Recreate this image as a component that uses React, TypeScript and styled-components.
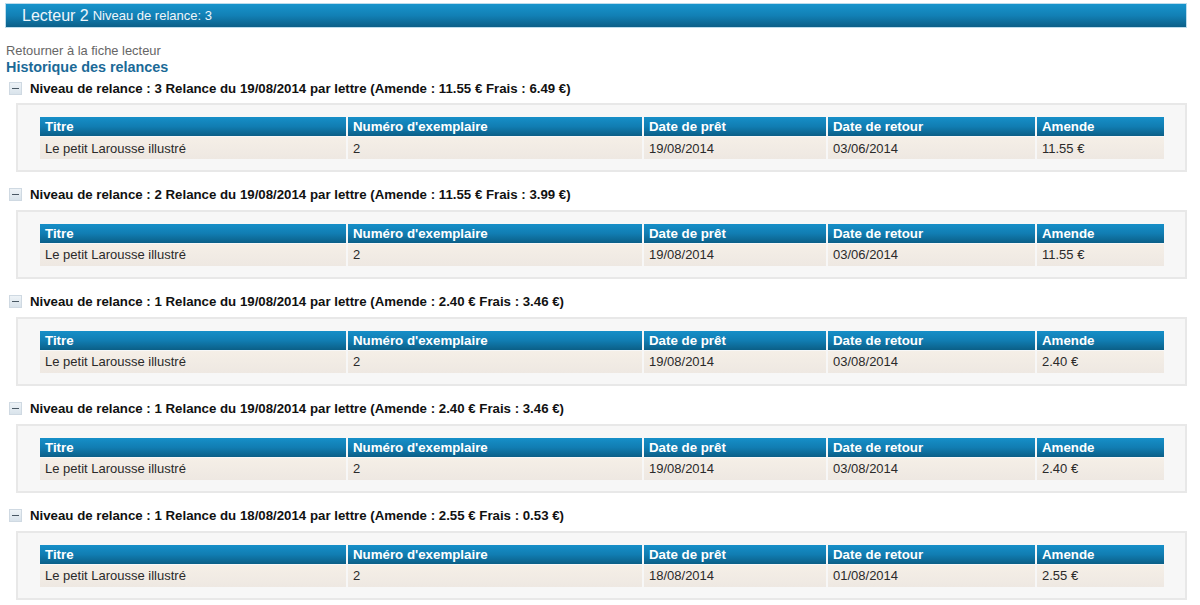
import React from "react";
import styled, { createGlobalStyle } from "styled-components";

const GlobalStyle = createGlobalStyle`
  html, body { margin: 0; padding: 0; background: #ffffff; overflow: hidden; }
  body { font-family: "Liberation Sans", Arial, sans-serif; color: #222; }
`;

const Page = styled.div`
  display: flex;
  flex-direction: column;
  padding-top: 3px;
`;

const TopBar = styled.div`
  margin: 0 13px 0 5px;
  height: 25px;
  box-sizing: border-box;
  border: 1px solid #bcdcec;
  background: linear-gradient(to bottom, #1894cc 0%, #1280b5 50%, #0b5f88 100%);
  display: flex;
  align-items: center;
  padding-left: 16px;
  color: #eef6fb;
  gap: 4px;
`;

const BarTitle = styled.span`
  font-size: 16px;
`;

const BarSub = styled.span`
  font-size: 13px;
`;

const BackLink = styled.a`
  margin: 16px 0 0 6px;
  font-size: 12.9px;
  line-height: 14px;
  color: #666;
  text-decoration: none;
`;

const Heading = styled.h2`
  margin: 1px 0 0 6px;
  font-size: 14.4px;
  line-height: 16px;
  font-weight: bold;
  color: #1b6a97;
`;

const Section = styled.section`
  display: flex;
  flex-direction: column;
  margin-top: ${(p: { $first?: boolean }) => (p.$first ? "6px" : "15.9px")};
`;

const SectionHeader = styled.div`
  display: flex;
  align-items: center;
  height: 14px;
  padding-left: 9px;
  gap: 8px;
  font-size: 13.25px;
  font-weight: bold;
  color: #111;
`;

const Toggle = styled.span`
  width: 13px;
  height: 13px;
  box-sizing: border-box;
  border: 1px solid #cfd9e2;
  background: linear-gradient(to bottom, #eef3f7, #d9e3eb);
  display: flex;
  align-items: center;
  justify-content: center;
  &::before {
    content: "";
    width: 7px;
    height: 1px;
    background: #4a5864;
  }
`;

const Panel = styled.div`
  margin: 8px 13px 0 16px;
  border: 2px solid #e8e8e8;
  background: #f7f7f7;
  padding: 12px 21px 11px 22px;
`;

const Grid = styled.div`
  display: grid;
  grid-template-columns: 306fr 294fr 182fr 207fr 127fr;
  column-gap: 2px;
  row-gap: 1px;
`;

const HeadCell = styled.div`
  height: 19px;
  display: flex;
  align-items: center;
  padding-left: 5px;
  font-size: 13.3px;
  font-weight: bold;
  color: #fff;
  background: linear-gradient(to bottom, #168fc8 0%, #117db2 50%, #0b5f87 100%);
`;

const DataCell = styled.div`
  height: 22px;
  display: flex;
  align-items: center;
  padding-left: 5px;
  font-size: 13px;
  color: #2a2a2a;
  background: linear-gradient(to bottom, #f5efe7, #eee8e2);
`;

type Relance = {
  niveau: number;
  date: string;
  amende: string;
  frais: string;
  pret: string;
  retour: string;
};

const relances: Relance[] = [
  { niveau: 3, date: "19/08/2014", amende: "11.55", frais: "6.49", pret: "19/08/2014", retour: "03/06/2014" },
  { niveau: 2, date: "19/08/2014", amende: "11.55", frais: "3.99", pret: "19/08/2014", retour: "03/06/2014" },
  { niveau: 1, date: "19/08/2014", amende: "2.40", frais: "3.46", pret: "19/08/2014", retour: "03/08/2014" },
  { niveau: 1, date: "19/08/2014", amende: "2.40", frais: "3.46", pret: "19/08/2014", retour: "03/08/2014" },
  { niveau: 1, date: "18/08/2014", amende: "2.55", frais: "0.53", pret: "18/08/2014", retour: "01/08/2014" },
];

const headers = ["Titre", "Numéro d'exemplaire", "Date de prêt", "Date de retour", "Amende"];

export default function App() {
  return (
    <>
      <GlobalStyle />
      <Page>
        <TopBar>
          <BarTitle>Lecteur 2</BarTitle>
          <BarSub>Niveau de relance: 3</BarSub>
        </TopBar>
        <BackLink href="#">Retourner à la fiche lecteur</BackLink>
        <Heading>Historique des relances</Heading>
        {relances.map((r, i) => (
          <Section key={i} $first={i === 0}>
            <SectionHeader>
              <Toggle />
              <span>
                Niveau de relance : {r.niveau} Relance du {r.date} par lettre (Amende : {r.amende} € Frais : {r.frais} €)
              </span>
            </SectionHeader>
            <Panel>
              <Grid>
                {headers.map((h) => (
                  <HeadCell key={h}>{h}</HeadCell>
                ))}
                <DataCell>Le petit Larousse illustré</DataCell>
                <DataCell>2</DataCell>
                <DataCell>{r.pret}</DataCell>
                <DataCell>{r.retour}</DataCell>
                <DataCell>{r.amende} €</DataCell>
              </Grid>
            </Panel>
          </Section>
        ))}
      </Page>
    </>
  );
}
